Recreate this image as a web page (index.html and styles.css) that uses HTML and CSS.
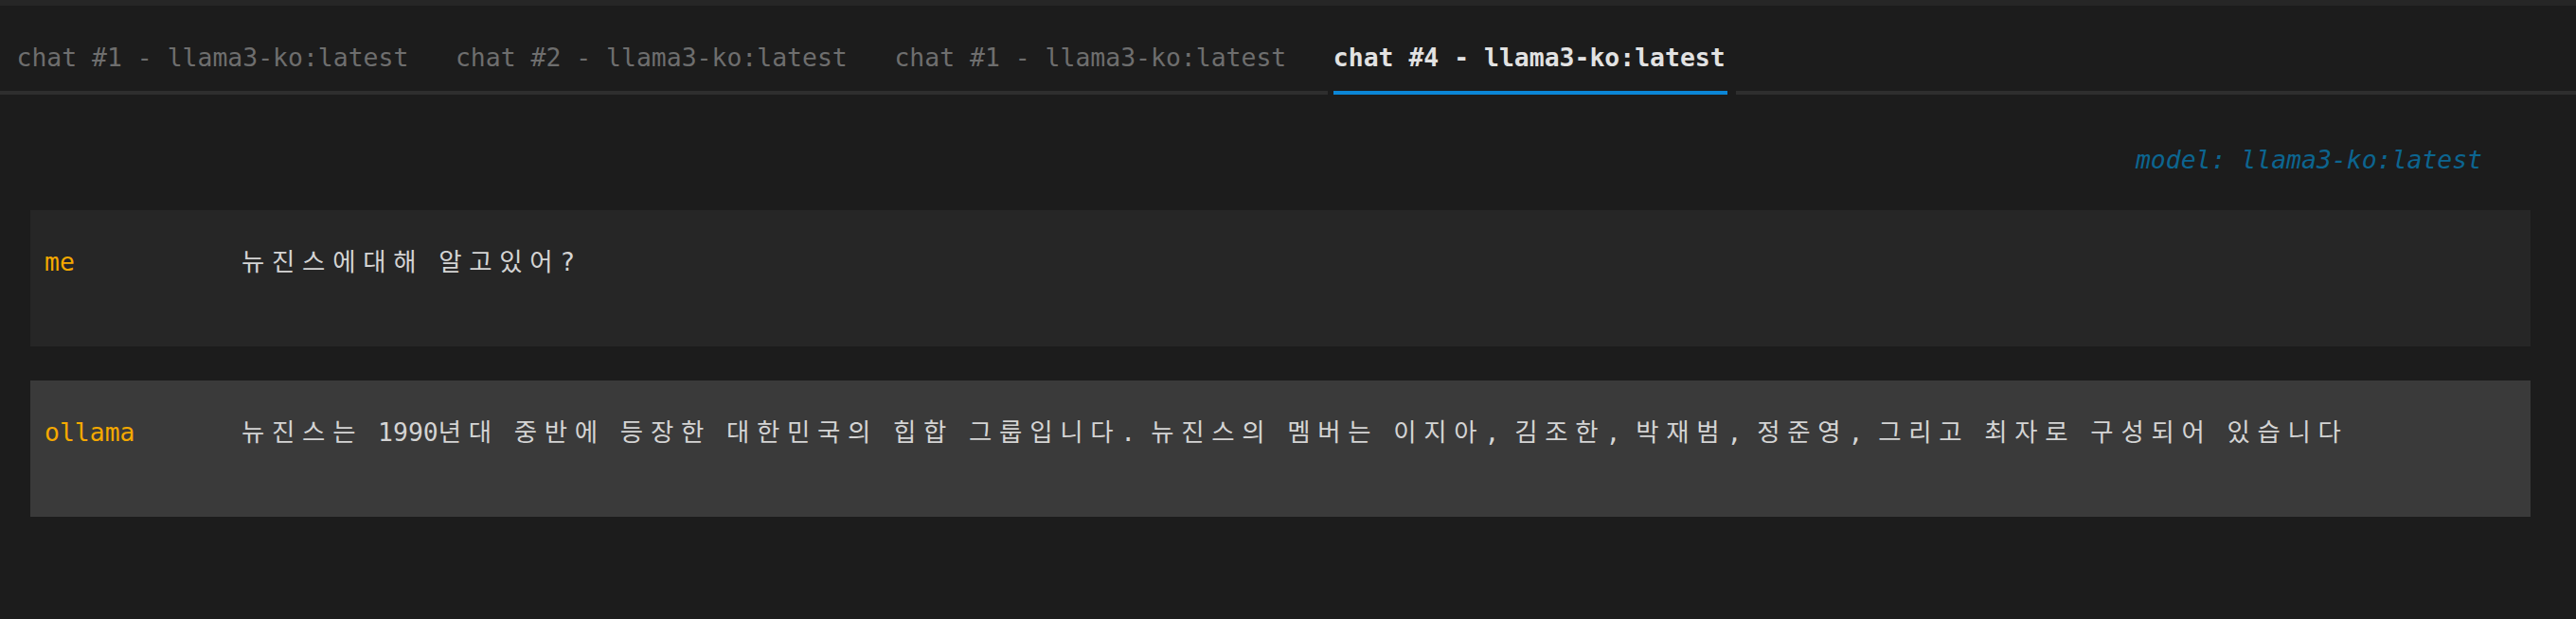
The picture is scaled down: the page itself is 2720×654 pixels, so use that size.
FILE: index.html
```html
<!DOCTYPE html>
<html lang="ko">
<head>
<meta charset="utf-8">
<title>chat</title>
<link rel="stylesheet" href="styles.css">
</head>
<body>
<div class="topstrip"></div>
<div class="tabs">
  <div class="tab">chat #1 - llama3-ko:latest</div>
  <div class="tab">chat #2 - llama3-ko:latest</div>
  <div class="tab">chat #1 - llama3-ko:latest</div>
  <div class="tab active">chat #4 - llama3-ko:latest</div>
</div>
<div class="panel">
  <div class="model">model: llama3-ko:latest</div>
  <div class="msg msg-me">
    <div class="who">me</div>
    <div class="text"><span class="ko">뉴진스에대해</span> <span class="ko">알고있어</span>?</div>
  </div>
  <div class="msg msg-bot">
    <div class="who">ollama</div>
    <div class="text"><span class="ko">뉴진스는</span> 1990<span class="ko">년대</span> <span class="ko">중반에</span> <span class="ko">등장한</span> <span class="ko">대한민국의</span> <span class="ko">힙합</span> <span class="ko">그룹입니다</span>. <span class="ko">뉴진스의</span> <span class="ko">멤버는</span> <span class="ko">이지아</span>, <span class="ko">김조한</span>, <span class="ko">박재범</span>, <span class="ko">정준영</span>, <span class="ko">그리고</span> <span class="ko">최자로</span> <span class="ko">구성되어</span> <span class="ko">있습니다</span></div>
  </div>
</div>
</body>
</html>
```
FILE: styles.css
```css
html, body {
  margin: 0;
  padding: 0;
  background: #1c1c1c;
}
body {
  width: 2720px;
  height: 654px;
  overflow: hidden;
  font-family: "DejaVu Sans Mono", "Noto Sans CJK KR", monospace;
  font-size: 26.44px;
  color: #d4d4d4;
}
.topstrip {
  height: 6px;
  background: #262626;
}
.tabs {
  display: flex;
  gap: 49.6px;
  padding: 39px 0 0 17.5px;
  border-bottom: 4px solid #2e2e2e;
}
.tab {
  position: relative;
  line-height: 32px;
  padding-bottom: 19px;
  color: #6e6e6e;
  white-space: pre;
}
.tab.active {
  color: #e2e2e2;
  font-weight: bold;
}
.tab.active::after {
  content: "";
  position: absolute;
  left: 0;
  right: -2px;
  bottom: -4px;
  height: 4px;
  background: #0b86d6;
  box-shadow: -6px 0 0 #1c1c1c, 9px 0 0 #1c1c1c;
}
.panel {
  padding: 0 48px 0 32px;
}
.model {
  margin-top: 53px;
  line-height: 32px;
  text-align: right;
  padding-right: 51px;
  font-style: italic;
  color: #0c6590;
}
.msg {
  display: grid;
  grid-template-columns: 208px 1fr;
  box-sizing: border-box;
  height: 144px;
  padding: 39px 0 0 15px;
  line-height: 32px;
  white-space: pre;
}
.msg-me {
  margin-top: 37px;
  background: #262626;
}
.msg-bot {
  margin-top: 36px;
  background: #3a3a3a;
}
.who {
  color: #f5a900;
}
.ko {
  font-family: "Noto Sans CJK KR", sans-serif;
  letter-spacing: 7.72px;
  line-height: 20px;
}
```
